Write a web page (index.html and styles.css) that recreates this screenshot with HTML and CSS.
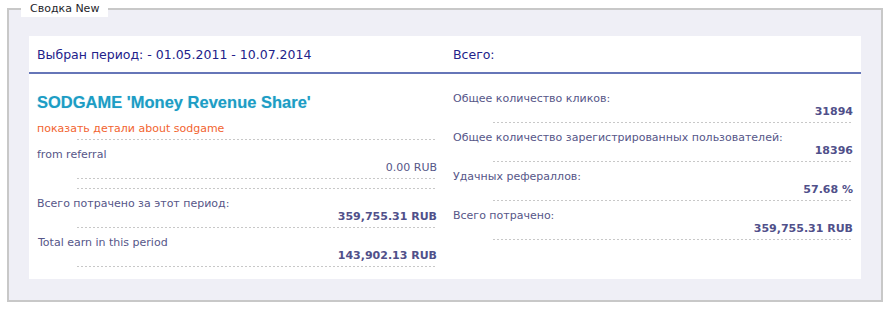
FILE: index.html
```html
<!DOCTYPE html>
<html lang="ru">
<head>
<meta charset="utf-8">
<title>Сводка New</title>
<link rel="stylesheet" href="styles.css">
</head>
<body>
<fieldset class="summary">
  <legend class="summary-legend">Сводка New</legend>
  <div class="panel">
    <div class="panel-head">
      <div class="head-cell">Выбран период: - 01.05.2011 - 10.07.2014</div>
      <div class="head-cell">Всего:</div>
    </div>
    <div class="panel-body">
      <div class="col">
        <div class="title">SODGAME 'Money Revenue Share'</div>
        <div class="stat stat--link">
          <a class="details-link" href="#">показать детали about sodgame</a>
        </div>
        <div class="stat">
          <div class="stat-label">from referral</div>
          <div class="stat-value stat-value--plain">0.00 RUB</div>
        </div>
        <div class="stat stat--empty"></div>
        <div class="stat">
          <div class="stat-label">Всего потрачено за этот период:</div>
          <div class="stat-value">359,755.31 RUB</div>
        </div>
        <div class="stat">
          <div class="stat-label stat-label--indent">Total earn in this period</div>
          <div class="stat-value">143,902.13 RUB</div>
        </div>
      </div>
      <div class="col">
        <div class="stat">
          <div class="stat-label">Общее количество кликов:</div>
          <div class="stat-value">31894</div>
        </div>
        <div class="stat">
          <div class="stat-label">Общее количество зарегистрированных пользователей:</div>
          <div class="stat-value">18396</div>
        </div>
        <div class="stat">
          <div class="stat-label">Удачных рефераллов:</div>
          <div class="stat-value">57.68 %</div>
        </div>
        <div class="stat">
          <div class="stat-label">Всего потрачено:</div>
          <div class="stat-value">359,755.31 RUB</div>
        </div>
      </div>
    </div>
  </div>
</fieldset>
</body>
</html>
```

FILE: styles.css
```css
html, body {
  margin: 0;
  padding: 0;
  background: #ffffff;
}

body {
  font-family: "DejaVu Sans", "Liberation Sans", sans-serif;
  font-size: 11px;
}

.summary {
  box-sizing: border-box;
  width: 876px;
  margin: 1px 0 0 7px;
  padding: 19px 20px 21px 20px;
  border: 2px solid #c8c8c8;
  background: #efeff6;
  min-width: 0;
}

.summary-legend {
  margin-left: -8px;
  padding: 0 9px;
  background: #ffffff;
  color: #1e1e2a;
  font-size: 11px;
  line-height: 16px;
}

.panel {
  background: #ffffff;
}

.panel-head {
  display: flex;
  height: 36px;
  border-bottom: 2px solid #6676b8;
}

.head-cell {
  flex: 1;
  padding-left: 8px;
  line-height: 37px;
  font-size: 12.5px;
  color: #22228a;
}

.panel-body {
  display: flex;
}

.col {
  flex: 1;
  padding: 10px 8px 12px 8px;
}

.title {
  margin: 8px 0 2px 0;
  font-family: "Liberation Sans", Arial, sans-serif;
  font-weight: bold;
  font-size: 16.5px;
  line-height: 20px;
  color: #1c9dc5;
  text-shadow: 0 0 1px rgba(28, 157, 197, 0.35);
}

.stat {
  padding-top: 8px;
}

.stat::after {
  content: "";
  display: block;
  height: 1px;
  margin: 4px 0 0 40px;
  background-image: linear-gradient(to right, #c8c8c8 50%, transparent 50%);
  background-size: 4px 1px;
  background-repeat: repeat-x;
}

.stat--empty {
  padding-top: 5px;
}

.details-link {
  display: block;
  line-height: 13px;
  color: #f26430;
  text-decoration: none;
}

.stat-label {
  line-height: 13px;
  color: #565688;
}

.stat-label--indent {
  padding-left: 1px;
}

.stat-value {
  line-height: 13px;
  text-align: right;
  font-weight: bold;
  color: #50508a;
}

.stat-value--plain {
  font-weight: normal;
  color: #565688;
}
```
